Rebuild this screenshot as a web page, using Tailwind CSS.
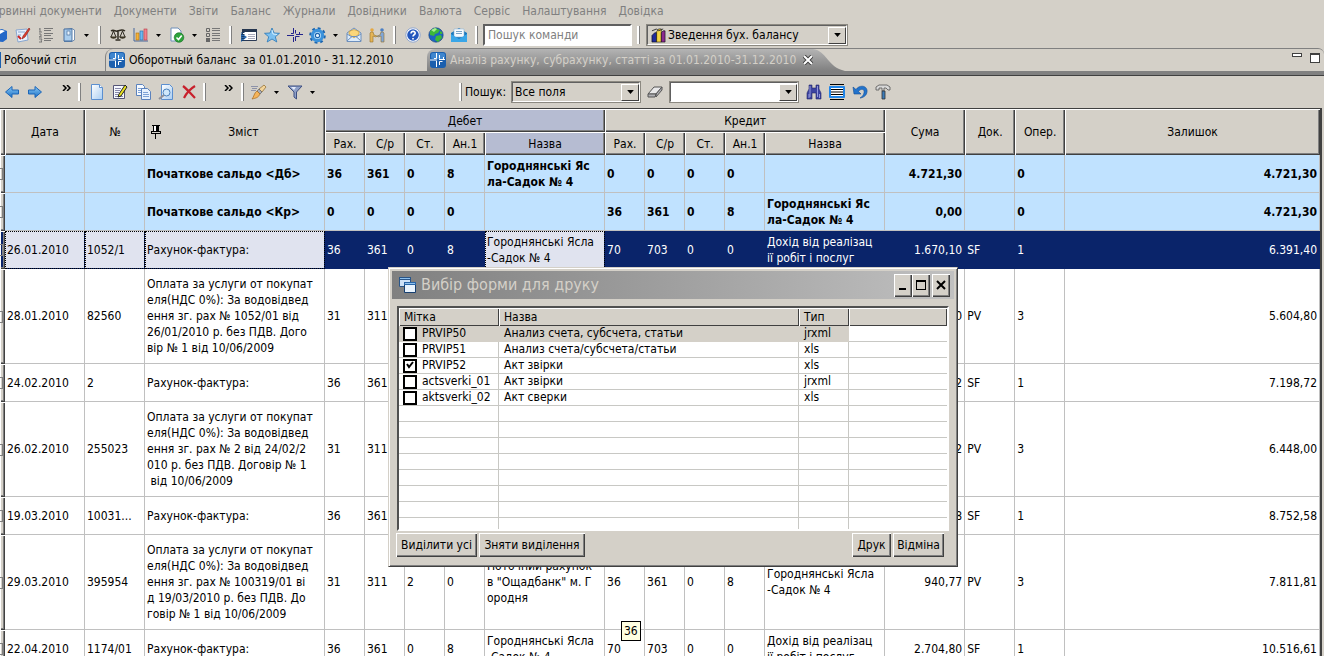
<!DOCTYPE html>
<html lang="uk">
<head>
<meta charset="utf-8">
<title>Аналіз рахунку</title>
<script src="https://cdn.jsdelivr.net/npm/@tailwindcss/browser@4"></script>
</head>
<body class="relative flex h-screen flex-col overflow-hidden bg-[#d4d0c8] font-['DejaVu_Sans_Condensed','Noto_Sans',sans-serif] text-[12px] leading-4 text-black">

<svg class="absolute size-0" aria-hidden="true">
  <defs>
    <linearGradient id="blue" x1="0" y1="0" x2="0" y2="1"><stop offset="0" stop-color="#8ccbf7"/><stop offset="1" stop-color="#1a6fc4"/></linearGradient>
    <linearGradient id="page" x1="0" y1="0" x2="1" y2="1"><stop offset="0" stop-color="#fff"/><stop offset="1" stop-color="#a9cdf2"/></linearGradient>
    <linearGradient id="tab" x1="0" y1="0" x2="0" y2="1"><stop offset="0" stop-color="#b4b4b4"/><stop offset="1" stop-color="#808080"/></linearGradient>
    <symbol id="caret" viewBox="0 0 5 3"><path d="M0 0h5L2.500 3z"/></symbol>
    <symbol id="chev" viewBox="0 0 9 6"><path d="M1 0l3 3-3 3M5 0l3 3-3 3" fill="none" stroke="#000" stroke-width="1.500"/></symbol>
    <symbol id="app" viewBox="0 0 16 16"><rect width="16" height="16" rx="3" fill="#1b5fae"/><rect x="1" y="1" width="14" height="6" rx="2" fill="#3f86cf"/><path d="M6.500 1v5.500H4M9.500 3v3.500M6.500 9v6M9.500 13V9.500h3M0 8h7M9 7.500h6M13.500 5v2" stroke="#fff" fill="none"/></symbol>
  </defs>
</svg>

<nav class="flex h-[22px] shrink-0 items-center gap-3 overflow-hidden whitespace-nowrap text-[#808080]">
  <a href="#" class="-ml-4">Первинні документи</a>
  <a href="#">Документи</a>
  <a href="#">Звіти</a>
  <a href="#">Баланс</a>
  <a href="#">Журнали</a>
  <a href="#">Довідники</a>
  <a href="#">Валюта</a>
  <a href="#">Сервіс</a>
  <a href="#">Налаштування</a>
  <a href="#">Довідка</a>
</nav>

<div class="flex h-[26px] shrink-0 items-center overflow-hidden [&>button]:flex [&>button]:h-6 [&>button]:shrink-0 [&>button]:items-center [&>button]:justify-center [&>i]:mx-[5px] [&>i]:h-[18px] [&>i]:w-[3px] [&>i]:shrink-0 [&>i]:border-r [&>i]:border-l-2 [&>i]:border-r-[#808080] [&>i]:border-l-white">
  <button aria-label="База даних" class="-ml-3 w-[23px]"><svg class="size-4" viewBox="0 0 16 16"><path d="M1 4l9-2 5 2v8l-4 3-9-1z" fill="#2468c8"/><path d="M3 4l7-1 3 1-5 3z" fill="#fff"/></svg></button>
  <button aria-label="Редагувати" class="w-[23px]"><svg class="size-4" viewBox="0 0 16 16"><path d="M1 3l11-1 1 11-10 2z" fill="#e8f0fb" stroke="#88a6cf"/><path d="M3 5h7M3 8h3" stroke="#88a6cf"/><path d="M14 1L8 9l-1 3 3-2 5-8z" fill="#e03b2c" stroke="#842018" stroke-width=".6"/><path d="M3 9l3 3" stroke="#c22" stroke-width="2"/></svg></button>
  <button aria-label="Нумерація" class="w-[23px]"><svg class="size-4" viewBox="0 0 16 16"><path d="M2 1v4M1 2h1M1 5h3M1 7h2v2l-2 1h3M1 12h3l-1 2 1 1H1" stroke="#777" fill="none"/><path d="M6 1.500h9M6 3.500h7M6 6.500h9M6 8.500h7M6 11.500h9M6 13.500h7" stroke="#777"/></svg></button>
  <button aria-label="Довідник" class="w-[23px]"><svg class="size-4" viewBox="0 0 16 16"><path d="M3 2l8-1 2 2v10l-2 2H3z" fill="#5c82ad"/><path d="M3 2h8v12H3z" fill="#a9cdee" stroke="#4a6f9c"/><rect x="6" y="4" width="3" height="4" fill="#eaf5ff" stroke="#4a6f9c" stroke-width=".7"/><path d="M11.500 2l2 1v10l-2 1" fill="#fff" stroke="#4a6f9c" stroke-width=".7"/></svg></button>
  <button aria-label="Більше довідників" class="w-[13px]"><svg class="h-[3px] w-[5px]"><use href="#caret"/></svg></button>
  <i></i>
  <button aria-label="Баланс" class="w-[23px]"><svg class="size-4" viewBox="0 0 16 16"><path d="M1 4c3-2 4 1 7 0s4-2 7 0M8 3v9M5.500 13h5" stroke="#2e2a20" stroke-width="1.500" fill="none"/><path d="M3.500 4L1 10M3.500 4L6 10M12.500 4L10 10M12.500 4L15 10" stroke="#2e2a20" fill="none"/><path d="M0 9.500h7c-1 3-6 3-7 0zM9 9.500h7c-1 3-6 3-7 0z" fill="#3b3524"/></svg></button>
  <button aria-label="Діаграма" class="w-[23px]"><svg class="size-4" viewBox="0 0 16 16"><path d="M1 1v13h14" fill="none" stroke="#47679b"/><rect x="3" y="6" width="3" height="7" fill="#f3b33a" stroke="#b06d10" stroke-width=".6"/><rect x="7" y="4" width="3" height="9" fill="#6db8f2" stroke="#24689f" stroke-width=".6"/><rect x="11" y="2" width="3" height="11" fill="#f1828c" stroke="#b53b48" stroke-width=".6"/></svg></button>
  <button aria-label="Більше діаграм" class="w-[13px]"><svg class="h-[3px] w-[5px]"><use href="#caret"/></svg></button>
  <button aria-label="Перевірити документ" class="w-[23px]"><svg class="size-4" viewBox="0 0 16 16"><path d="M2 1h7l3 3v10H2z" fill="#fff" stroke="#6f8fb9"/><circle cx="10" cy="10.500" r="4.800" fill="#2da33b" stroke="#136b20" stroke-width=".6"/><path d="M7.500 10.500l2 2 3.200-4" stroke="#fff" stroke-width="1.600" fill="none"/></svg></button>
  <button aria-label="Більше перевірок" class="w-[13px]"><svg class="h-[3px] w-[5px]"><use href="#caret"/></svg></button>
  <button aria-label="Список" class="w-[23px]"><svg class="size-4" viewBox="0 0 16 16"><path d="M1.500 1.500h3v3h-3zM1.500 6.500h3v3h-3z" fill="none" stroke="#666"/><path d="M1 11h4v4H1z" fill="#666"/><path d="M7 1.500h8M7 3.500h8M7 6.500h8M7 8.500h8M7 11.500h8M7 13.500h8" stroke="#777"/></svg></button>
  <i></i>
  <button aria-label="Панель" class="w-[23px]"><svg class="size-4" viewBox="0 0 16 16"><path d="M1.500 2.500h14v11h-14z" fill="#fff" stroke="#2b3a55"/><path d="M1 2h15v3H1z" fill="#26364f"/><path d="M7 7.500h7M7 9.500h7M7 11.500h7" stroke="#aab"/><path d="M0 6l6 4-6 5z" fill="#2d6bb0"/><path d="M2 5v9" stroke="#163a66" stroke-dasharray="1 1" stroke-width="3"/></svg></button>
  <button aria-label="Вибране" class="w-[23px]"><svg class="size-4" viewBox="0 0 16 16"><path d="M8 1l2 5 5.500.3-4.200 3.500 1.500 5.200L8 12l-4.800 3 1.500-5.200L.5 6.300 6 6z" fill="#7cc0f0" stroke="#2877b8" stroke-width=".8"/><path d="M8 3l1 4 4 .5" stroke="#d6efff" fill="none"/></svg></button>
  <button aria-label="Вузол" class="w-[23px]"><svg class="size-4" viewBox="0 0 16 16"><path d="M6.500 1v5.500H4M8.500 3v3.500M0 8.500h7M6.500 15v-5M8.500 14V9.500h4M9 7.500h7M12.500 5v2" stroke="#22228c" fill="none"/></svg></button>
  <button aria-label="Налаштування" class="w-[23px]"><svg class="size-[17px]" viewBox="0 0 16 16"><circle cx="8" cy="8" r="6.800" fill="none" stroke="#1c65ae" stroke-width="2" stroke-dasharray="2.670 2.670"/><circle cx="8" cy="8" r="4.800" fill="#b9e0fa" stroke="#3b92db" stroke-width="3"/><circle cx="8" cy="8" r="2" fill="#e6f5ff" stroke="#1c65ae"/></svg></button>
  <button aria-label="Більше налаштувань" class="w-[13px]"><svg class="h-[3px] w-[5px]"><use href="#caret"/></svg></button>
  <button aria-label="Пошта" class="w-[23px]"><svg class="size-4" viewBox="0 0 16 16"><path d="M1 6l7-5 7 5v8.500H1z" fill="#dcebfb" stroke="#6d8fbd"/><path d="M3 7V4.500l5-2 5 2V7l-5 4z" fill="#fbd67a" stroke="#c79a35" stroke-width=".7"/><path d="M1 14l5-4.500h4l5 4.500M1 7l5 3M15 7l-5 3" fill="none" stroke="#6d8fbd"/></svg></button>
  <button aria-label="Контрагенти" class="w-[23px]"><svg class="size-4" viewBox="0 0 16 16"><circle cx="3" cy="3" r="1.800" fill="#e6a740"/><circle cx="13" cy="3" r="1.800" fill="#4a7fc4"/><path d="M2 5h2l1 3 3 1-1 1-3-1v6H1V6z" fill="#e5b556" stroke="#94702a" stroke-width=".6"/><path d="M14 5h-2l-1 3-3 1 1 1 3-1v6h3V6z" fill="#7fa6d8" stroke="#94702a" stroke-width=".6"/></svg></button>
  <i></i>
  <button aria-label="Допомога" class="w-[23px]"><svg class="size-4" viewBox="0 0 16 16"><circle cx="8" cy="8" r="7.200" fill="#fff" stroke="#90a6ce"/><circle cx="8" cy="8" r="5.800" fill="#2357bd"/><path d="M6 6.500c0-3 4.300-2.500 4.200-.3C10 8 8 7.500 8 9.600M8 11v1.500" fill="none" stroke="#fff" stroke-width="1.600"/></svg></button>
  <button aria-label="Веб-сайт" class="w-[23px]"><svg class="size-4" viewBox="0 0 16 16"><circle cx="8" cy="8" r="7.200" fill="#1d63c2" stroke="#123c70" stroke-width=".6"/><path d="M2 4l5-3 5 2-2 3-3 1-1 2-4-1zM8 9l5-1 1 3-4 4-3-2zM12 4l2 1v2h-2z" fill="#3cb83a"/><path d="M3 3l4-2 2 1-3 3z" fill="#a6f08c"/></svg></button>
  <button aria-label="Надіслати лист" class="w-[23px]"><svg class="size-4" viewBox="0 0 16 16"><path d="M0 6l8-5 8 5v9H0z" fill="#1877bd"/><path d="M3 2h10v8H3z" fill="#f7fbff" stroke="#8eb6d6" stroke-width=".6"/><path d="M5 4.500h6M5 6.500h6" stroke="#7aa4c7"/><path d="M0 7l8 5 8-5v8H0z" fill="#3aa6e8"/></svg></button>
  <i></i>
  <input type="text" aria-label="Пошук команди" placeholder="Пошук команди" class="h-[22px] w-[149px] shrink-0 border-2 border-t-[#606060] border-r-white border-b-white border-l-[#606060] bg-white px-[3px] outline-none placeholder:text-[#808080]">
  <i></i>
  <div class="relative ml-[1px] flex h-[22px] w-[202px] shrink-0 items-center border-2 border-t-[#606060] border-r-white border-b-white border-l-[#606060] outline-1 -outline-offset-1 outline-[#8c8981]">
    <svg class="ml-[3px] size-[15px] shrink-0" viewBox="0 0 16 16"><path d="M1 8l3-3h2v10H1z" fill="#1f2a9c" stroke="#000" stroke-width=".6"/><path d="M6 4l2-3h3v14H6z" fill="#f4d545" stroke="#000" stroke-width=".6"/><path d="M11 5l2-2h2v12h-4z" fill="#8b2a8f" stroke="#000" stroke-width=".6"/><path d="M1 3l5-2 2 2 5-2" fill="none" stroke="#333"/></svg>
    <select aria-label="Звіт" class="h-full flex-1 appearance-none bg-transparent pl-[2px] outline-none"><option>Зведення бух. балансу</option></select>
    <span class="pointer-events-none flex h-[17px] w-[18px] items-center justify-center border border-t-white border-r-[#404040] border-b-[#404040] border-l-white bg-[#d4d0c8]"><svg class="h-1 w-[7px]"><use href="#caret"/></svg></span>
  </div>
</div>

<div class="flex h-[23px] shrink-0 overflow-hidden rounded-tr-md border-t border-[#808080] whitespace-nowrap">
  <a href="#" class="flex w-[105px] shrink-0 items-center gap-[3px]"><span class="h-4 w-px bg-[#1b5fae]"></span>Робочий стіл</a>
  <a href="#" class="flex w-[322px] shrink-0 items-center gap-1 rounded-tl-lg border-l border-[#808080] pl-[3px]"><svg class="size-4"><use href="#app"/></svg><span>Оборотный баланс&nbsp; за 01.01.2010 - 31.12.2010</span></a>
  <div class="flex w-[386px] shrink-0 items-center gap-1 rounded-tl-lg bg-linear-to-b from-[#b4b4b4] to-[#808080] pl-[3px] text-[#d4d0c8]"><svg class="size-4 shrink-0"><use href="#app"/></svg><a href="#" class="w-[349px]">Аналіз рахунку, субрахунку, статті за 01.01.2010-31.12.2010</a>
    <button aria-label="Закрити вкладку" class="shrink-0"><svg class="size-[10px]" viewBox="0 0 10 10"><path d="M1 1l8 8M9 1L1 9" stroke="#404040" stroke-width="4"/><path d="M1 1l8 8M9 1L1 9" stroke="#fff" stroke-width="2"/></svg></button></div>
  <svg class="h-[22px] w-8 shrink-0" viewBox="0 0 32 22"><path d="M0 0c14 2 14 18 32 22H0z" fill="url(#tab)"/></svg>
  <div class="ml-auto flex gap-2 pt-1 pr-1">
    <button aria-label="Згорнути панель" class="h-1 w-[10px] border border-[#404040] bg-white"></button>
    <button aria-label="Розгорнути панель" class="h-[10px] w-[10px] border border-t-2 border-[#404040] bg-white"></button>
  </div>
</div>
<div class="h-[5px] shrink-0 border-b border-[#404040] bg-[#808080]"></div>

<div class="flex h-8 shrink-0 items-center overflow-hidden [&>button]:flex [&>button]:h-6 [&>button]:shrink-0 [&>button]:items-center [&>button]:justify-center [&>i]:mx-[5px] [&>i]:h-[18px] [&>i]:w-[3px] [&>i]:shrink-0 [&>i]:border-r [&>i]:border-l-2 [&>i]:border-r-[#808080] [&>i]:border-l-white">
  <button aria-label="Назад" class="w-[23px]"><svg class="h-3 w-[14px]" viewBox="0 0 14 12"><path d="M.5 6L7 .5V4h6.500v4H7v3.500z" fill="url(#blue)" stroke="#1c66b8"/></svg></button>
  <button aria-label="Вперед" class="w-[23px]"><svg class="h-3 w-[14px]" viewBox="0 0 14 12"><path d="M13.500 6L7 .5V4H.5v4H7v3.500z" fill="url(#blue)" stroke="#1c66b8"/></svg></button>
  <button aria-label="Ще навігація" class="ml-[10px] w-5 pb-2"><svg class="h-[6px] w-[9px]"><use href="#chev"/></svg></button>
  <i class="!mx-0 !ml-[2px]"></i>
  <button aria-label="Створити" class="ml-1 w-[23px]"><svg class="size-4" viewBox="0 0 16 16"><path d="M2.500.5h8l3 3v12h-11z" fill="url(#page)" stroke="#5b8fd0"/><path d="M10.500.5v3h3" fill="#fff" stroke="#5b8fd0"/></svg></button>
  <button aria-label="Змінити" class="w-[23px]"><svg class="size-4" viewBox="0 0 16 16"><path d="M1.500 1.500h11v13h-11z" fill="#f6f9ff" stroke="#557"/><path d="M3 4.500h6M3 6.500h5M3 8.500h4M3 10.500h3M3 12.500h8" stroke="#88a"/><path d="M13 1l2 2-6 9-3 1 1-3z" fill="#e8e020" stroke="#222"/></svg></button>
  <button aria-label="Копіювати" class="w-[23px]"><svg class="size-4" viewBox="0 0 16 16"><path d="M1.500.5h6l2 2v9h-8z" fill="#f6faff" stroke="#5b82bd"/><path d="M3 4.500h4M3 6.500h3M3 8.500h3" stroke="#7ea2d6"/><path d="M6.500 4.500h6l3 3v8h-9z" fill="#e8f2fd" stroke="#5b82bd"/><path d="M8 8.500h5M8 10.500h6M8 12.500h6" stroke="#7ea2d6"/></svg></button>
  <button aria-label="Перегляд" class="w-[23px]"><svg class="size-4" viewBox="0 0 16 16"><path d="M3.500.5h8l3 3v12h-11z" fill="url(#page)" stroke="#5b8fd0"/><circle cx="8.500" cy="8.500" r="3.500" fill="#cfe8fb" stroke="#4980bb"/><path d="M6 11l-5 4" stroke="#8f8f98" stroke-width="2"/></svg></button>
  <button aria-label="Видалити" class="w-[23px]"><svg class="size-4" viewBox="0 0 16 16"><path d="M2 2c4 3 8 8 12 12M14 2C9 5 5 10 3 14" stroke="#c8202c" stroke-width="2.200" fill="none"/></svg></button>
  <i class="!mx-[3px]"></i>
  <button aria-label="Ще дії" class="ml-[9px] w-5 pb-2"><svg class="h-[6px] w-[9px]"><use href="#chev"/></svg></button>
  <i class="!mr-[3px] !ml-[3px]"></i>
  <button aria-label="Очистити формат" class="w-[23px]"><svg class="size-4" viewBox="0 0 16 16"><path d="M0 2.500h7M1 4.500h5M0 6.500h5" stroke="#8d92a8"/><path d="M13 1l2 2-4 5-3-3z" fill="#f3d49a" stroke="#8a6528" stroke-width=".7"/><path d="M8 5l3 3-2 2-3-3z" fill="#a6acb8" stroke="#666" stroke-width=".7"/><path d="M6 7l3 3c-2 4-4 4-8 5 2-2 2-6 5-8z" fill="#f5b45b" stroke="#a56a20" stroke-width=".7"/></svg></button>
  <button aria-label="Більше форматів" class="w-[13px]"><svg class="h-[3px] w-[5px]"><use href="#caret"/></svg></button>
  <button aria-label="Фільтр" class="w-[23px]"><svg class="size-4" viewBox="0 0 16 16"><path d="M1 2h14L9.500 8v7L7 13V8z" fill="#8fa0c8" stroke="#3d4f82"/><path d="M4 3h5L7 6z" fill="#e4ebfa"/></svg></button>
  <button aria-label="Більше фільтрів" class="w-[13px]"><svg class="h-[3px] w-[5px]"><use href="#caret"/></svg></button>
  <i class="!mr-[3px] !ml-[140px]"></i>
  <label for="field" class="w-[46px] shrink-0">Пошук:</label>
  <div class="flex h-[22px] w-[130px] shrink-0 items-center border-2 border-t-[#606060] border-r-white border-b-white border-l-[#606060] outline-1 -outline-offset-1 outline-[#8c8981]">
    <select id="field" class="h-full flex-1 appearance-none bg-transparent pl-[2px] outline-none"><option>Все поля</option></select>
    <span class="pointer-events-none flex h-[17px] w-[18px] items-center justify-center border border-t-white border-r-[#404040] border-b-[#404040] border-l-white bg-[#d4d0c8]"><svg class="h-1 w-[7px]"><use href="#caret"/></svg></span>
  </div>
  <button aria-label="Очистити" class="w-7"><svg class="size-4" viewBox="0 0 16 16"><path d="M1 10l6-7h8l-6 7z" fill="#e9e9ea" stroke="#555"/><path d="M1 10v3h7l1-3zM9 10v3l6-7V3z" fill="#b0b0b4" stroke="#555"/></svg></button>
  <div class="flex h-[22px] w-[130px] shrink-0 items-center border-2 border-t-[#606060] border-r-white border-b-white border-l-[#606060] bg-white outline-1 -outline-offset-1 outline-[#8c8981]">
    <select aria-label="Значення пошуку" class="h-full flex-1 appearance-none bg-transparent pl-[2px] outline-none"><option></option></select>
    <span class="pointer-events-none flex h-[17px] w-[18px] items-center justify-center border border-t-white border-r-[#404040] border-b-[#404040] border-l-white bg-[#d4d0c8]"><svg class="h-1 w-[7px]"><use href="#caret"/></svg></span>
  </div>
  <button aria-label="Знайти" class="ml-[3px] w-[23px]"><svg class="size-4" viewBox="0 0 16 16"><path d="M3 1h3v3h4V1h3v4l2 4v6h-5V9H6v6H1V9l2-4z" fill="#3d43a0" stroke="#22266a" stroke-width=".6"/><path d="M4 2v11M11.500 2v11M3 10v4M13.500 10v4" stroke="#a9aee8" stroke-width=".8"/></svg></button>
  <button aria-label="Рядки" class="w-[23px]"><svg class="size-4" viewBox="0 0 16 16"><path d="M1 .5h14M1 15.500h14" stroke="#000"/><rect x="0" y="2" width="16" height="12" rx="1" fill="#2085e8"/><rect x="2" y="4" width="12" height="8" fill="#fff"/><path d="M2 5.500h12M2 8h12M2 10.500h12" stroke="#000"/></svg></button>
  <button aria-label="Скасувати" class="w-[23px]"><svg class="size-4" viewBox="0 0 16 16"><path d="M1 3l1 7h7L6.500 7.500C9 4 13 5 12 9c-.5 2-2 4-4 5 5-.5 7.500-4 7-8C14 1 7 1 4 5.500z" fill="#2273cc" stroke="#124d96" stroke-width=".6"/></svg></button>
  <button aria-label="Інструменти" class="w-[23px]"><svg class="size-4" viewBox="0 0 16 16"><path d="M1 3l3-2h8l3 2v3h-2l-2-2H9v3H7V4H4v2H1z" fill="#d8d8d8" stroke="#555" stroke-width=".8"/><path d="M7 7h3v8H7z" fill="#3c7cb9" stroke="#333" stroke-width=".8"/></svg></button>
</div>

<main class="mr-[2px] flex-1 overflow-hidden border-r-2 border-[#404040] bg-white">
<table class="w-full table-fixed border-separate border-spacing-0 whitespace-nowrap [&_tbody_td]:border-r [&_tbody_td]:border-b [&_tbody_td]:border-[#c0c0c0] [&_tbody_td]:px-[2px] [&_tbody_td:last-child]:text-right [&_tbody_td:nth-child(15)]:text-right [&_th]:bg-[#d4d0c8] [&_th]:p-0 [&_th]:font-normal [&_th]:shadow-[inset_1px_1px_0_#fff,inset_-1px_-1px_0_#404040,inset_-2px_-2px_0_#808080] [&_th>i]:block [&_th>i]:h-3 [&_th>i]:w-[3px] [&_th>i]:border [&_th>i]:border-l-0 [&_th>i]:border-[#808080]">
  <colgroup><col class="w-[5px]"><col class="w-20"><col class="w-[60px]"><col class="w-[180px]"><col class="w-10"><col class="w-10"><col class="w-10"><col class="w-10"><col class="w-[120px]"><col class="w-10"><col class="w-10"><col class="w-10"><col class="w-10"><col class="w-[120px]"><col class="w-20"><col class="w-[50px]"><col class="w-[50px]"><col></colgroup>
  <thead class="[&_th]:border-[#404040]">
    <tr class="h-6 [&>th]:border-t">
      <th rowspan="2"></th><th rowspan="2">Дата</th><th rowspan="2">№</th>
      <th rowspan="2"><div class="flex items-center"><svg class="ml-[5px] h-4 w-3" viewBox="0 0 12 16"><path d="M2 1.500h8M3.500 2v5M1.500 7v2M10.500 7v2M1 9.500h10M2 7.500h8M5.500 10v5" stroke="#000" fill="none"/><path d="M4 2h2v5H4z" fill="#fff"/><path d="M6 2h3v6H6z"/></svg><span class="flex-1">Зміст</span></div></th>
      <th colspan="5" class="!bg-[#b6bcd2]">Дебет</th><th colspan="5">Кредит</th>
      <th rowspan="2">Сума</th><th rowspan="2">Док.</th><th rowspan="2">Опер.</th><th rowspan="2">Залишок</th>
    </tr>
    <tr class="h-[23px]"><th>Рах.</th><th>С/р</th><th>Ст.</th><th>Ан.1</th><th class="!bg-[#b6bcd2]">Назва</th><th>Рах.</th><th>С/р</th><th>Ст.</th><th>Ан.1</th><th>Назва</th></tr>
  </thead>
  <tbody>
    <tr class="h-[38px] bg-[#c0e2ff] font-bold"><th><i></i></th><td></td><td></td><td>Початкове сальдо &lt;Дб&gt;</td><td>36</td><td>361</td><td>0</td><td>8</td><td>Городнянські Яс<br>ла-Садок № 4</td><td>0</td><td>0</td><td>0</td><td>0</td><td></td><td>4.721,30</td><td></td><td>0</td><td>4.721,30</td></tr>
    <tr class="h-[38px] bg-[#c0e2ff] font-bold"><th><i></i></th><td></td><td></td><td>Початкове сальдо &lt;Кр&gt;</td><td>0</td><td>0</td><td>0</td><td>0</td><td></td><td>36</td><td>361</td><td>0</td><td>8</td><td>Городнянські Яс<br>ла-Садок № 4</td><td>0,00</td><td></td><td>0</td><td>4.721,30</td></tr>
    <tr class="h-[38px] bg-[#0a246a] text-white [&>td]:!border-[#0a246a]"><th class="!bg-[#0a246a]"><i></i></th><td class="bg-[#e0e3ef] text-black outline-1 -outline-offset-1 outline-black outline-dotted">26.01.2010</td><td class="bg-[#e0e3ef] text-black outline-1 -outline-offset-1 outline-black outline-dotted">1052/1</td><td class="bg-[#e0e3ef] text-black outline-1 -outline-offset-1 outline-black outline-dotted">Рахунок-фактура:</td><td>36</td><td>361</td><td>0</td><td>8</td><td class="bg-[#e0e3ef] text-black outline-1 -outline-offset-1 outline-black outline-dotted">Городнянські Ясла<br>-Садок № 4</td><td>70</td><td>703</td><td>0</td><td>0</td><td>Дохід від реалізац<br>ії робіт і послуг</td><td>1.670,10</td><td>SF</td><td>1</td><td>6.391,40</td></tr>
    <tr class="h-[95px]"><th><i></i></th><td>28.01.2010</td><td>82560</td><td>Оплата за услуги от покупат<br>еля(НДС 0%): За водовідвед<br>ення зг. рах № 1052/01 від<br>26/01/2010 р. без ПДВ. Дого<br>вір № 1 від 10/06/2009</td><td>31</td><td>311</td><td></td><td></td><td></td><td></td><td></td><td></td><td></td><td></td><td>786,60</td><td>PV</td><td>3</td><td>5.604,80</td></tr>
    <tr class="h-[38px]"><th><i></i></th><td>24.02.2010</td><td>2</td><td>Рахунок-фактура:</td><td>36</td><td>361</td><td></td><td></td><td></td><td></td><td></td><td></td><td></td><td></td><td>1.593,92</td><td>SF</td><td>1</td><td>7.198,72</td></tr>
    <tr class="h-[95px]"><th><i></i></th><td>26.02.2010</td><td>255023</td><td>Оплата за услуги от покупат<br>еля(НДС 0%): За водовідвед<br>ення зг. рах № 2 від 24/02/2<br>010 р. без ПДВ. Договір № 1<br>&nbsp;від 10/06/2009</td><td>31</td><td>311</td><td></td><td></td><td></td><td></td><td></td><td></td><td></td><td></td><td>750,72</td><td>PV</td><td>3</td><td>6.448,00</td></tr>
    <tr class="h-[38px]"><th><i></i></th><td>19.03.2010</td><td>10031...</td><td>Рахунок-фактура:</td><td>36</td><td>361</td><td></td><td></td><td></td><td></td><td></td><td></td><td></td><td></td><td>2.304,58</td><td>SF</td><td>1</td><td>8.752,58</td></tr>
    <tr class="h-[95px]"><th><i></i></th><td>29.03.2010</td><td>395954</td><td>Оплата за услуги от покупат<br>еля(НДС 0%): За водовідвед<br>ення зг. рах № 100319/01 ві<br>д 19/03/2010 р. без ПДВ. До<br>говір № 1 від 10/06/2009</td><td>31</td><td>311</td><td>2</td><td>0</td><td>Поточний рахунок<br>в "Ощадбанк" м. Г<br>ородня</td><td>36</td><td>361</td><td>0</td><td>8</td><td>Городнянські Ясла<br>-Садок № 4</td><td>940,77</td><td>PV</td><td>3</td><td>7.811,81</td></tr>
    <tr class="h-[38px]"><th><i></i></th><td>22.04.2010</td><td>1174/01</td><td>Рахунок-фактура:</td><td>36</td><td>361</td><td>0</td><td>8</td><td>Городнянські Ясла<br>-Садок № 4</td><td>70</td><td>703</td><td>0</td><td>0</td><td>Дохід від реалізац<br>ії робіт і послуг</td><td>2.704,80</td><td>SF</td><td>1</td><td>10.516,61</td></tr>
  </tbody>
</table>
</main>

<div role="tooltip" class="absolute top-[621px] left-[621px] border border-black bg-[#ffffe1] px-[2px] py-px">36</div>

<section role="dialog" aria-labelledby="dlg" class="absolute top-[267px] left-[388px] flex h-[300px] w-[570px] flex-col border border-t-[#d4d0c8] border-r-[#404040] border-b-[#404040] border-l-[#d4d0c8] bg-[#d4d0c8] p-[3px] shadow-[inset_1px_1px_0_#fff,inset_-1px_-1px_0_#808080]">
  <header class="flex h-7 shrink-0 items-center bg-linear-to-r from-[#808080] to-[#c0c0c0] pr-1 pl-[6px]">
    <svg class="size-[18px]" viewBox="0 0 18 18"><path d="M1.500 1.500h11v9h-11z" fill="#cfe2f7" stroke="#2a5587"/><path d="M1 1h12v3H1z" fill="#2a5587"/><path d="M6.500 6.500h11v10h-11z" fill="#e9f3fd" stroke="#173f70"/><path d="M6 6h12v3H6z" fill="#2a66a8"/><path d="M2 2.500h10M7 7.500h10" stroke="#8fc1ee"/></svg>
    <h2 id="dlg" class="ml-[5px] flex-1 text-[16px] leading-5 text-[#d4d0c8]">Вибір форми для друку</h2>
    <div class="flex [&>button]:flex [&>button]:h-[23px] [&>button]:w-[18px] [&>button]:items-center [&>button]:justify-center [&>button]:bg-[#d4d0c8] [&>button]:shadow-[inset_1px_1px_0_#fff,inset_-1px_-1px_0_#404040,inset_-2px_-2px_0_#808080]">
      <button aria-label="Згорнути"><svg class="size-3" viewBox="0 0 12 12"><path d="M2 10h7" stroke="#000" stroke-width="2"/></svg></button>
      <button aria-label="Розгорнути"><svg class="size-3" viewBox="0 0 12 12"><path d="M1 1h10v10H1zM2 3v7h8V3z" fill-rule="evenodd"/></svg></button>
      <button aria-label="Закрити" class="ml-[2px]"><svg class="size-3" viewBox="0 0 12 12"><path d="M2 2l8 8M10 2l-8 8" stroke="#000" stroke-width="2"/></svg></button>
    </div>
  </header>
  <div class="mx-[5px] mt-[7px] flex-1 overflow-hidden border-2 border-t-[#505050] border-r-white border-b-white border-l-[#505050] bg-white">
    <table class="w-full table-fixed border-separate border-spacing-0 whitespace-nowrap [&_td]:h-4 [&_td]:border-r [&_td]:border-b [&_td]:border-[#c8c8c4] [&_td]:p-0 [&_td]:pl-[5px] [&_td]:leading-[15px] [&_td:last-child]:border-r-0 [&_th]:h-[18px] [&_th]:bg-[#d4d0c8] [&_th]:p-0 [&_th]:pl-[5px] [&_th]:text-left [&_th]:leading-[18px] [&_th]:font-normal [&_th]:shadow-[inset_1px_1px_0_#fff,inset_-1px_-1px_0_#404040] [&_tr>td:first-child]:pl-1 [&_label]:flex [&_label]:items-center [&_label]:gap-[5px] [&_input]:size-[14px] [&_input]:appearance-none [&_input]:border-2 [&_input]:border-black [&_input]:bg-white [&_input]:shrink-0">
      <colgroup><col class="w-[100px]"><col class="w-[300px]"><col class="w-[50px]"><col></colgroup>
      <thead><tr><th>Мітка</th><th>Назва</th><th>Тип</th><th></th></tr></thead>
      <tbody>
        <tr class="[&>td:not(:last-child)]:!border-[#d4d0c8] [&>td:not(:last-child)]:bg-[#d4d0c8]"><td><label><input type="checkbox">PRVIP50</label></td><td>Анализ счета, субсчета, статьи</td><td>jrxml</td><td></td></tr>
        <tr><td><label><input type="checkbox">PRVIP51</label></td><td>Анализ счета/субсчета/статьи</td><td>xls</td><td></td></tr>
        <tr><td><label class="relative"><input type="checkbox" class="peer" checked><svg class="pointer-events-none absolute top-[3px] left-[3px] hidden size-2 peer-checked:block" viewBox="0 0 8 8"><path d="M1 3l2 3 4-5" fill="none" stroke="#000" stroke-width="2"/></svg>PRVIP52</label></td><td>Акт звірки</td><td>xls</td><td></td></tr>
        <tr><td><label><input type="checkbox">actsverki_01</label></td><td>Акт звірки</td><td>jrxml</td><td></td></tr>
        <tr><td><label><input type="checkbox">aktsverki_02</label></td><td>Акт сверки</td><td>xls</td><td></td></tr>
        <tr><td></td><td></td><td></td><td></td></tr>
        <tr><td></td><td></td><td></td><td></td></tr>
        <tr><td></td><td></td><td></td><td></td></tr>
        <tr><td></td><td></td><td></td><td></td></tr>
        <tr><td></td><td></td><td></td><td></td></tr>
        <tr><td></td><td></td><td></td><td></td></tr>
        <tr><td></td><td></td><td></td><td></td></tr>
        <tr><td></td><td></td><td></td><td></td></tr>
      </tbody>
    </table>
  </div>
  <footer class="mx-1 mt-[2px] mb-[6px] flex h-6 shrink-0 gap-[2px] whitespace-nowrap [&>button]:shadow-[inset_1px_1px_0_#fff,inset_-1px_-1px_0_#404040,inset_-2px_-2px_0_#808080]">
    <button class="w-[81px]">Виділити усі</button>
    <button class="w-[106px]">Зняти виділення</button>
    <button class="ml-auto w-[39px]">Друк</button>
    <button class="mr-[6px] w-[51px]">Відміна</button>
  </footer>
</section>
</body>
</html>
